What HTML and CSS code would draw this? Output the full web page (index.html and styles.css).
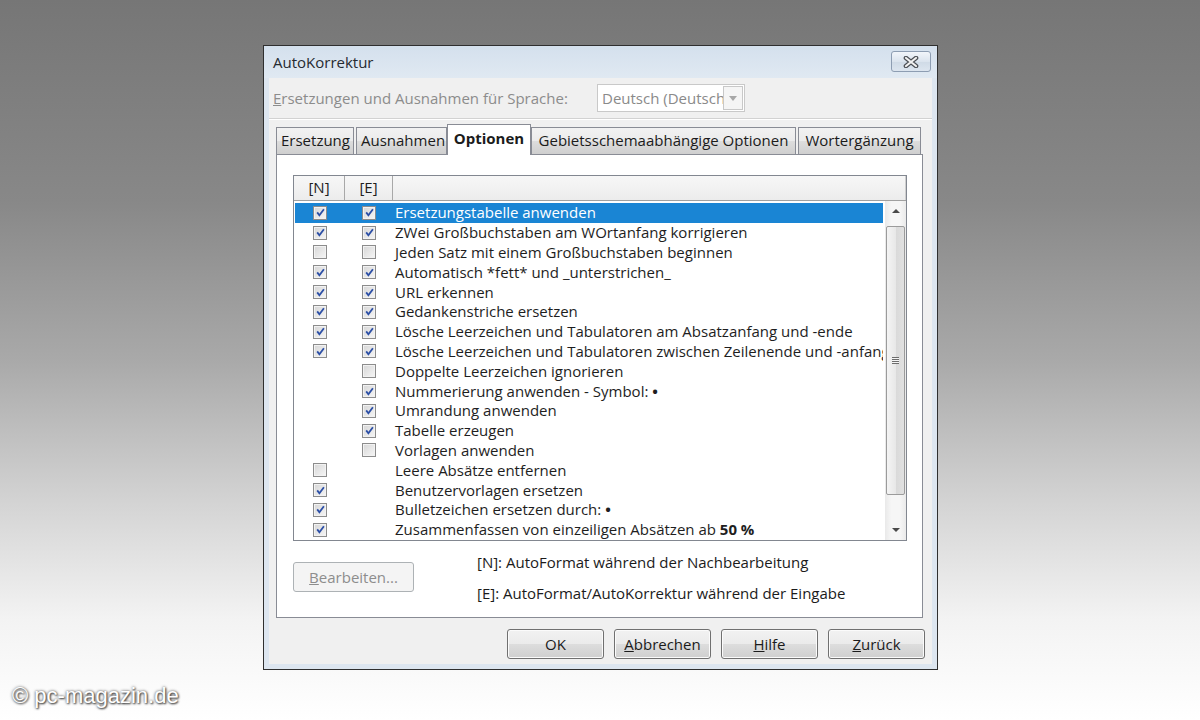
FILE: index.html
```html
<!DOCTYPE html>
<html lang="de">
<head>
  <meta charset="UTF-8" />
  <title>AutoKorrektur</title>
  <link rel="stylesheet" href="styles.css">
</head>
<body>
  <div class="dialog">
    <div class="titlebar">
      <span class="title">AutoKorrektur</span>
      <div class="close-btn">
        <svg viewBox="0 0 16 12" width="16" height="12">
          <path class="x-outer" d="M3 2 13 10M13 2 3 10"/>
          <path class="x-inner" d="M3 2 13 10M13 2 3 10"/>
        </svg>
      </div>
    </div>

    <div class="client">
      <div class="lang-row">
        <span class="lang-label"><u>E</u>rsetzungen und Ausnahmen für Sprache:</span>
        <div class="combo">
          <span class="combo-text">Deutsch (Deutsch</span>
          <span class="combo-arrow"><svg viewBox="0 0 8 5" width="8" height="5"><path d="M0 0h8L4 5z"/></svg></span>
        </div>
      </div>
      <div class="separator"></div>

      <div class="tabs">
        <div class="tab tab-ersetzung">Ersetzung</div>
        <div class="tab tab-ausnahmen">Ausnahmen</div>
        <div class="tab active tab-optionen">Optionen</div>
        <div class="tab tab-gebiet">Gebietsschemaabhängige Optionen</div>
        <div class="tab tab-wort">Wortergänzung</div>
      </div>

      <div class="tab-panel">
        <div class="listbox">
          <div class="list-header">
            <div class="hcell">[N]</div>
            <div class="hcell">[E]</div>
            <div class="hcell hcell-text"></div>
          </div>
          <div class="list-body">
            <div class="rows" id="rows"></div>
            <div class="scrollbar">
              <div class="scroll-btn"><span class="arrow-up"></span></div>
              <div class="scroll-track">
                <div class="thumb"><span class="grip"></span></div>
              </div>
              <div class="scroll-btn"><span class="arrow-down"></span></div>
            </div>
          </div>
        </div>

        <div class="panel-bottom">
          <button class="btn btn-disabled edit-btn"><u>B</u>earbeiten...</button>
          <div class="legend">
            <div>[N]: AutoFormat während der Nachbearbeitung</div>
            <div>[E]: AutoFormat/AutoKorrektur während der Eingabe</div>
          </div>
        </div>
      </div>

      <div class="button-row">
        <button class="btn">OK</button>
        <button class="btn"><u>A</u>bbrechen</button>
        <button class="btn"><u>H</u>ilfe</button>
        <button class="btn"><u>Z</u>urück</button>
      </div>
    </div>
  </div>

  <div class="watermark">© pc-magazin.de</div>

  <script>
    // n / e: 1 = checked, 0 = unchecked, null = no box
    const options = [
      [1, 1, "Ersetzungstabelle anwenden"],
      [1, 1, "ZWei Großbuchstaben am WOrtanfang korrigieren"],
      [0, 0, "Jeden Satz mit einem Großbuchstaben beginnen"],
      [1, 1, "Automatisch *fett* und _unterstrichen_"],
      [1, 1, "URL erkennen"],
      [1, 1, "Gedankenstriche ersetzen"],
      [1, 1, "Lösche Leerzeichen und Tabulatoren am Absatzanfang und -ende"],
      [1, 1, "Lösche Leerzeichen und Tabulatoren zwischen Zeilenende und -anfang"],
      [null, 0, "Doppelte Leerzeichen ignorieren"],
      [null, 1, "Nummerierung anwenden - Symbol: <b>•</b>"],
      [null, 1, "Umrandung anwenden"],
      [null, 1, "Tabelle erzeugen"],
      [null, 0, "Vorlagen anwenden"],
      [0, null, "Leere Absätze entfernen"],
      [1, null, "Benutzervorlagen ersetzen"],
      [1, null, "Bulletzeichen ersetzen durch: <b>•</b>"],
      [1, null, "Zusammenfassen von einzeiligen Absätzen ab <b>50 %</b>"]
    ];

    const checkSvg = '<svg viewBox="0 0 13 13" width="13" height="13"><path d="M3.2 6.4 5.4 9.3 9.9 3.2"/></svg>';

    function box(state) {
      if (state === null) return "";
      return `<span class="cb">${state ? checkSvg : ""}</span>`;
    }

    const rows = document.getElementById("rows");
    options.forEach(([n, e, text], i) => {
      const row = document.createElement("div");
      row.className = i === 0 ? "row selected" : "row";
      row.innerHTML = `<div class="cell">${box(n)}</div><div class="cell">${box(e)}</div><div class="cell-text">${text}</div>`;
      rows.appendChild(row);
    });
  </script>
</body>
</html>
```

FILE: styles.css
```css
* { box-sizing: border-box; }

body {
  margin: 0;
  height: 720px;
  overflow: hidden;
  display: flex;
  flex-direction: column;
  font-family: "Open Sans", "Noto Sans", sans-serif;
  font-size: 14px;
  color: #1e1e1e;
  background: linear-gradient(to bottom, #767676 0%, #888888 28%, #a9a9a9 50%, #d4d4d4 70%, #f3f3f3 86%, #ffffff 100%);
}

.dialog {
  margin: 45px 0 0 263px;
  width: 675px;
  height: 625px;
  border: 1px solid #2f2f2f;
  background: #dde6f0;
  padding: 0 5px 5px;
  display: flex;
  flex-direction: column;
}

.titlebar {
  height: 32px;
  display: flex;
  align-items: flex-start;
  justify-content: space-between;
  background: linear-gradient(to bottom, #d4e0ed, #e0e9f2);
  margin: 0 -5px;
  padding: 0 6px 0 9px;
}

.title {
  margin-top: 6px;
  font-size: 15px;
  color: #262a30;
}

.close-btn {
  margin-top: 5px;
  width: 40px;
  height: 21px;
  border: 1px solid #8d9db2;
  border-radius: 3px;
  background: linear-gradient(to bottom, #f1f5fa, #dbe4ee 50%, #cfdae6 51%, #dce5ef);
  display: flex;
  align-items: center;
  justify-content: center;
}

.close-btn svg path { fill: none; stroke-linecap: round; }
.close-btn .x-outer { stroke: #4b4f55; stroke-width: 4.6; }
.close-btn .x-inner { stroke: #f2f2f2; stroke-width: 2.2; }

.client {
  flex: 1;
  background: #f0f0f0;
  padding: 6px 7px 5px 4px;
  display: flex;
  flex-direction: column;
}

.lang-row {
  height: 28px;
  display: flex;
  align-items: center;
}

.lang-label {
  width: 324px;
  font-size: 15px;
  color: #8c8c8c;
}

.combo {
  width: 148px;
  height: 28px;
  border: 1px solid #c9c9c9;
  background: #fff;
  display: flex;
  align-items: center;
  padding: 1px;
}

.combo-text {
  flex: 1;
  white-space: nowrap;
  padding-left: 3px;
  font-size: 15px;
  color: #8a8a8a;
}

.combo-arrow {
  width: 22px;
  height: 24px;
  margin-left: -2px;
  border: 1px solid #c8c8c8;
  background: #f5f5f5;
  display: flex;
  align-items: center;
  justify-content: center;
}

.combo-arrow svg { fill: #a8a8a8; }

.separator {
  margin: 6px -7px 0 -4px;
  border-top: 1px solid #d2d2d2;
  border-bottom: 1px solid #fff;
}

.tabs {
  margin: 4px 0 0 3px;
  height: 30px;
  display: flex;
  align-items: flex-end;
  gap: 2px;
}

.tab {
  height: 27px;
  padding: 0 4px;
  border: 1px solid #898c95;
  border-bottom: none;
  background: linear-gradient(to bottom, #f2f2f2, #ebebeb 50%, #dddddd 51%, #cfcfcf);
  font-size: 15px;
  line-height: 25px;
  color: #1b1b1b;
  text-align: center;
  white-space: nowrap;
}

.tab-ersetzung { width: 78px; }
.tab-ausnahmen { width: 91px; }
.tab-gebiet { width: 265px; }
.tab-wort { width: 123px; }

.tab.active {
  width: 84px;
  height: 31px;
  margin: 0 -2px -1px;
  background: #fff;
  font-weight: bold;
  line-height: 27px;
  position: relative;
  z-index: 1;
}

.tab-panel {
  height: 464px;
  margin: 0 2px 0 3px;
  border: 1px solid #898c95;
  background: #fff;
  padding: 20px 15px 0 16px;
}

.listbox {
  height: 366px;
  border: 1px solid #828790;
  display: flex;
  flex-direction: column;
}

.list-header {
  height: 25px;
  display: grid;
  grid-template-columns: 51px 48px 1fr;
  background: linear-gradient(to bottom, #f7f7f7, #ececec);
  border-bottom: 1px solid #a0a0a0;
}

.hcell {
  border-right: 1px solid #a8a8a8;
  text-align: center;
  line-height: 23px;
  font-size: 15px;
}

.hcell-text { border-right: 1px solid #cfcfcf; }

.list-body {
  flex: 1;
  display: flex;
  min-height: 0;
}

.rows {
  flex: 1;
  min-width: 0;
  padding-top: 2px;
  overflow: hidden;
}

.row {
  height: 19.8px;
  margin: 0 2px 0 1px;
  display: grid;
  grid-template-columns: 50px 48px minmax(0, 1fr);
  align-items: center;
}

.row.selected {
  background: #1a85d4;
  color: #fff;
}

.cell {
  display: flex;
  justify-content: center;
}

.cell-text {
  padding-left: 2px;
  white-space: nowrap;
  overflow: hidden;
  font-size: 15px;
  line-height: 19px;
}

.cell-text b { font-weight: bold; }

.cb {
  width: 14px;
  height: 14px;
  border: 1px solid #8c8c8c;
  background: linear-gradient(135deg, #d6d6d6, #f6f6f6);
  box-shadow: inset 0 0 0 1px #f2f2f2;
  display: block;
}

.cb svg {
  display: block;
  margin: -0.5px;
}

.cb svg path {
  fill: none;
  stroke: #2c4fa6;
  stroke-width: 1.8;
}

.scrollbar {
  width: 21px;
  display: flex;
  flex-direction: column;
  background: linear-gradient(to right, #e9e9e9, #f6f6f6 30%, #f6f6f6 70%, #eaeaea);
}

.scroll-btn {
  height: 20px;
  display: flex;
  align-items: center;
  justify-content: center;
}

.arrow-up,
.arrow-down {
  width: 0;
  height: 0;
  border-left: 4px solid transparent;
  border-right: 4px solid transparent;
}

.arrow-up { border-bottom: 4px solid #4a4a4a; }
.arrow-down { border-top: 4px solid #4a4a4a; }

.scroll-track {
  flex: 1;
  padding: 5px 1px 0 1px;
}

.thumb {
  height: 269px;
  border: 1px solid #9b9b9b;
  border-radius: 2px;
  background: linear-gradient(to right, #f4f4f4, #e8e8e8 50%, #d9d9d9 51%, #e1e1e1);
  display: flex;
  align-items: center;
  justify-content: center;
}

.grip {
  width: 7px;
  height: 7px;
  background: repeating-linear-gradient(to bottom, #6d6d6d 0 1px, #f4f4f4 1px 2px);
}

.panel-bottom {
  display: flex;
  padding-top: 11px;
}

.legend {
  margin-left: 63px;
  display: flex;
  flex-direction: column;
  gap: 11px;
  font-size: 15px;
  line-height: 20px;
  color: #1b1b1b;
}

.button-row {
  margin-top: 11px;
  display: flex;
  justify-content: flex-end;
  gap: 10px;
}

.btn {
  width: 97px;
  height: 30px;
  border: 1px solid #707070;
  border-radius: 3px;
  background: linear-gradient(to bottom, #f2f2f2, #ebebeb 50%, #dddddd 51%, #cfcfcf);
  font-family: "Open Sans", "Noto Sans", sans-serif;
  font-size: 15px;
  color: #1b1b1b;
  padding: 0;
  box-shadow: inset 0 0 0 1px #fbfbfb;
}

.btn.btn-disabled {
  border-color: #adb2b5;
  background: #f4f4f4;
  color: #8d8d8d;
  box-shadow: none;
}

.btn.edit-btn {
  margin-top: 10px;
  width: 121px;
  flex-shrink: 0;
}

.watermark {
  margin: 12px 0 0 12px;
  font-family: "Liberation Sans", Arial, sans-serif;
  font-size: 22px;
  line-height: 28px;
  color: #fff;
  text-shadow: 0 0 3px #4a4a4a, 1px 1px 2px #3a3a3a;
}
```
